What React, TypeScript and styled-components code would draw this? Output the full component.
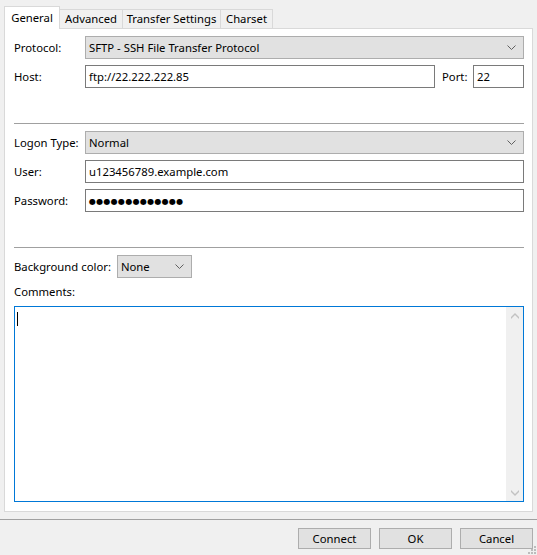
import React from "react";
import styled, { createGlobalStyle } from "styled-components";

const Global = createGlobalStyle`
  html, body { margin: 0; padding: 0; background: #f0f0f0; }
  body { font-family: "Segoe UI", "Noto Sans", "Liberation Sans", sans-serif; font-size: 11.3px; color: #000; }
  * { box-sizing: border-box; }
`;

const Window = styled.div`
  position: relative;
  width: 537px;
  height: 555px;
  display: flex;
  flex-direction: column;
  background: #f0f0f0;
  overflow: hidden;
`;

const TabStrip = styled.div`
  display: flex;
  align-items: flex-end;
  height: 28px;
  padding-left: 4px;
`;

const Tab = styled.div<{ $active?: boolean; $w: number }>`
  position: relative;
  z-index: ${(p) => (p.$active ? 1 : 0)};
  height: ${(p) => (p.$active ? "23px" : "19px")};
  margin-bottom: ${(p) => (p.$active ? "-1px" : "0")};
  margin-left: -1px;
  &:first-child { margin-left: 0; }
  width: ${(p) => p.$w}px;
  display: flex;
  align-items: ${(p) => (p.$active ? "flex-start" : "center")};
  padding-top: ${(p) => (p.$active ? "3px" : "0")};
  justify-content: center;
  background: ${(p) => (p.$active ? "#fff" : "#f0f0f0")};
  border: 1px solid #d9d9d9;
  border-bottom: none;
  white-space: nowrap;
  line-height: 16px;
`;

const Panel = styled.div`
  height: 484px;
  margin: 0 4px 0 4px;
  border: 1px solid #d9d9d9;
  background: #fff;
  display: flex;
  flex-direction: column;
  padding: 7px 8px 9px 9px;
`;

const FormGrid = styled.div`
  display: grid;
  grid-template-columns: 71px 1fr;
  row-gap: 6px;
  align-items: center;
`;

const Label = styled.span`
  line-height: 16px;
  white-space: nowrap;
`;

const HostLine = styled.div`
  display: flex;
  align-items: center;
`;

const PortLabel = styled.span`
  margin-left: 7px;
  width: 31px;
  white-space: nowrap;
`;

const TextBox = styled.div<{ $grow?: boolean; $w?: number }>`
  height: 23px;
  border: 1px solid #7a7a7a;
  background: #fff;
  padding: 0 3px;
  display: flex;
  align-items: center;
  white-space: nowrap;
  overflow: hidden;
  ${(p) => (p.$grow ? "flex: 1;" : "")}
  ${(p) => (p.$w ? `width: ${p.$w}px;` : "")}
`;

const Dots = styled.span`
  font-family: "DejaVu Sans", sans-serif;
  font-size: 8px;
  letter-spacing: 0.3px;
  padding-top: 1px;
`;

const Combo = styled.div<{ $w?: number }>`
  height: 23px;
  border: 1px solid #adadad;
  background: #e1e1e1;
  padding: 0 7px 0 3px;
  display: flex;
  align-items: center;
  justify-content: space-between;
  white-space: nowrap;
  ${(p) => (p.$w ? `width: ${p.$w}px;` : "")}
`;

const Separator = styled.div<{ $top: number; $bottom: number }>`
  height: 1px;
  background: #a0a0a0;
  margin-top: ${(p) => p.$top}px;
  margin-bottom: ${(p) => p.$bottom}px;
`;

const InlineRow = styled.div`
  display: flex;
  align-items: center;
  gap: 6px;
`;

const CommentsLabel = styled.div`
  margin-top: 6px;
  margin-bottom: 6px;
  line-height: 16px;
`;

const Memo = styled.div`
  height: 196px;
  border: 1px solid #0078d7;
  background: #fff;
  display: flex;
`;

const MemoText = styled.div`
  flex: 1;
  padding: 5px 0 0 2px;
`;

const Caret = styled.div`
  width: 1px;
  height: 14px;
  background: #000;
`;

const ScrollBar = styled.div`
  width: 17px;
  background: #f0f0f0;
  display: flex;
  flex-direction: column;
  justify-content: space-between;
  align-items: center;
  padding: 6px 0 5px;
`;

const BottomRule = styled.div`
  height: 1px;
  background: #a0a0a0;
  margin-top: 7px;
`;

const ButtonBar = styled.div`
  display: flex;
  justify-content: flex-end;
  gap: 8px;
  padding: 8px 4px 0 0;
`;

const Button = styled.button`
  width: 73px;
  height: 21px;
  border: 1px solid #adadad;
  background: #e1e1e1;
  font: inherit;
  color: #000;
  padding: 0;
  line-height: 16px;
`;

const Grip = styled.svg`
  position: absolute;
  right: 1px;
  bottom: 1px;
`;

const Chevron = () => (
  <svg width="9" height="5" viewBox="0 0 9 5">
    <polyline points="0.5,0.5 4.5,4.5 8.5,0.5" fill="none" stroke="#606060" strokeWidth="1" />
  </svg>
);

const ArrowUp = () => (
  <svg width="8" height="6" viewBox="0 0 8 6">
    <polygon points="0,4 4,0 8,4 8,6 4,2 0,6" fill="#c2c2c2" />
  </svg>
);

const ArrowDown = () => (
  <svg width="8" height="6" viewBox="0 0 8 6">
    <polygon points="0,0 4,4 8,0 8,2 4,6 0,2" fill="#c2c2c2" />
  </svg>
);

export default function App() {
  return (
    <>
      <Global />
      <Window>
        <TabStrip>
          <Tab $active $w={56}>General</Tab>
          <Tab $w={64}>Advanced</Tab>
          <Tab $w={99}>Transfer Settings</Tab>
          <Tab $w={53}>Charset</Tab>
        </TabStrip>
        <Panel>
          <FormGrid>
            <Label>Protocol:</Label>
            <Combo>
              <span>SFTP - SSH File Transfer Protocol</span>
              <Chevron />
            </Combo>
            <Label>Host:</Label>
            <HostLine>
              <TextBox $grow>ftp://22.222.222.85</TextBox>
              <PortLabel>Port:</PortLabel>
              <TextBox $w={51}>22</TextBox>
            </HostLine>
          </FormGrid>
          <Separator $top={35} $bottom={7} />
          <FormGrid>
            <Label>Logon Type:</Label>
            <Combo>
              <span>Normal</span>
              <Chevron />
            </Combo>
            <Label>User:</Label>
            <TextBox>u123456789.example.com</TextBox>
            <Label>Password:</Label>
            <TextBox>
              <Dots>●●●●●●●●●●●●●</Dots>
            </TextBox>
          </FormGrid>
          <Separator $top={35} $bottom={7} />
          <InlineRow>
            <Label>Background color:</Label>
            <Combo $w={75}>
              <span>None</span>
              <Chevron />
            </Combo>
          </InlineRow>
          <CommentsLabel>Comments:</CommentsLabel>
          <Memo>
            <MemoText>
              <Caret />
            </MemoText>
            <ScrollBar>
              <ArrowUp />
              <ArrowDown />
            </ScrollBar>
          </Memo>
        </Panel>
        <BottomRule />
        <ButtonBar>
          <Button>Connect</Button>
          <Button>OK</Button>
          <Button>Cancel</Button>
        </ButtonBar>
        <Grip width="10" height="10" viewBox="0 0 10 10">
          <rect x="8" y="2" width="2" height="2" fill="#bcbcbc" />
          <rect x="5" y="5" width="2" height="2" fill="#bcbcbc" />
          <rect x="8" y="5" width="2" height="2" fill="#bcbcbc" />
          <rect x="2" y="8" width="2" height="2" fill="#bcbcbc" />
          <rect x="5" y="8" width="2" height="2" fill="#bcbcbc" />
          <rect x="8" y="8" width="2" height="2" fill="#bcbcbc" />
        </Grip>
      </Window>
    </>
  );
}
